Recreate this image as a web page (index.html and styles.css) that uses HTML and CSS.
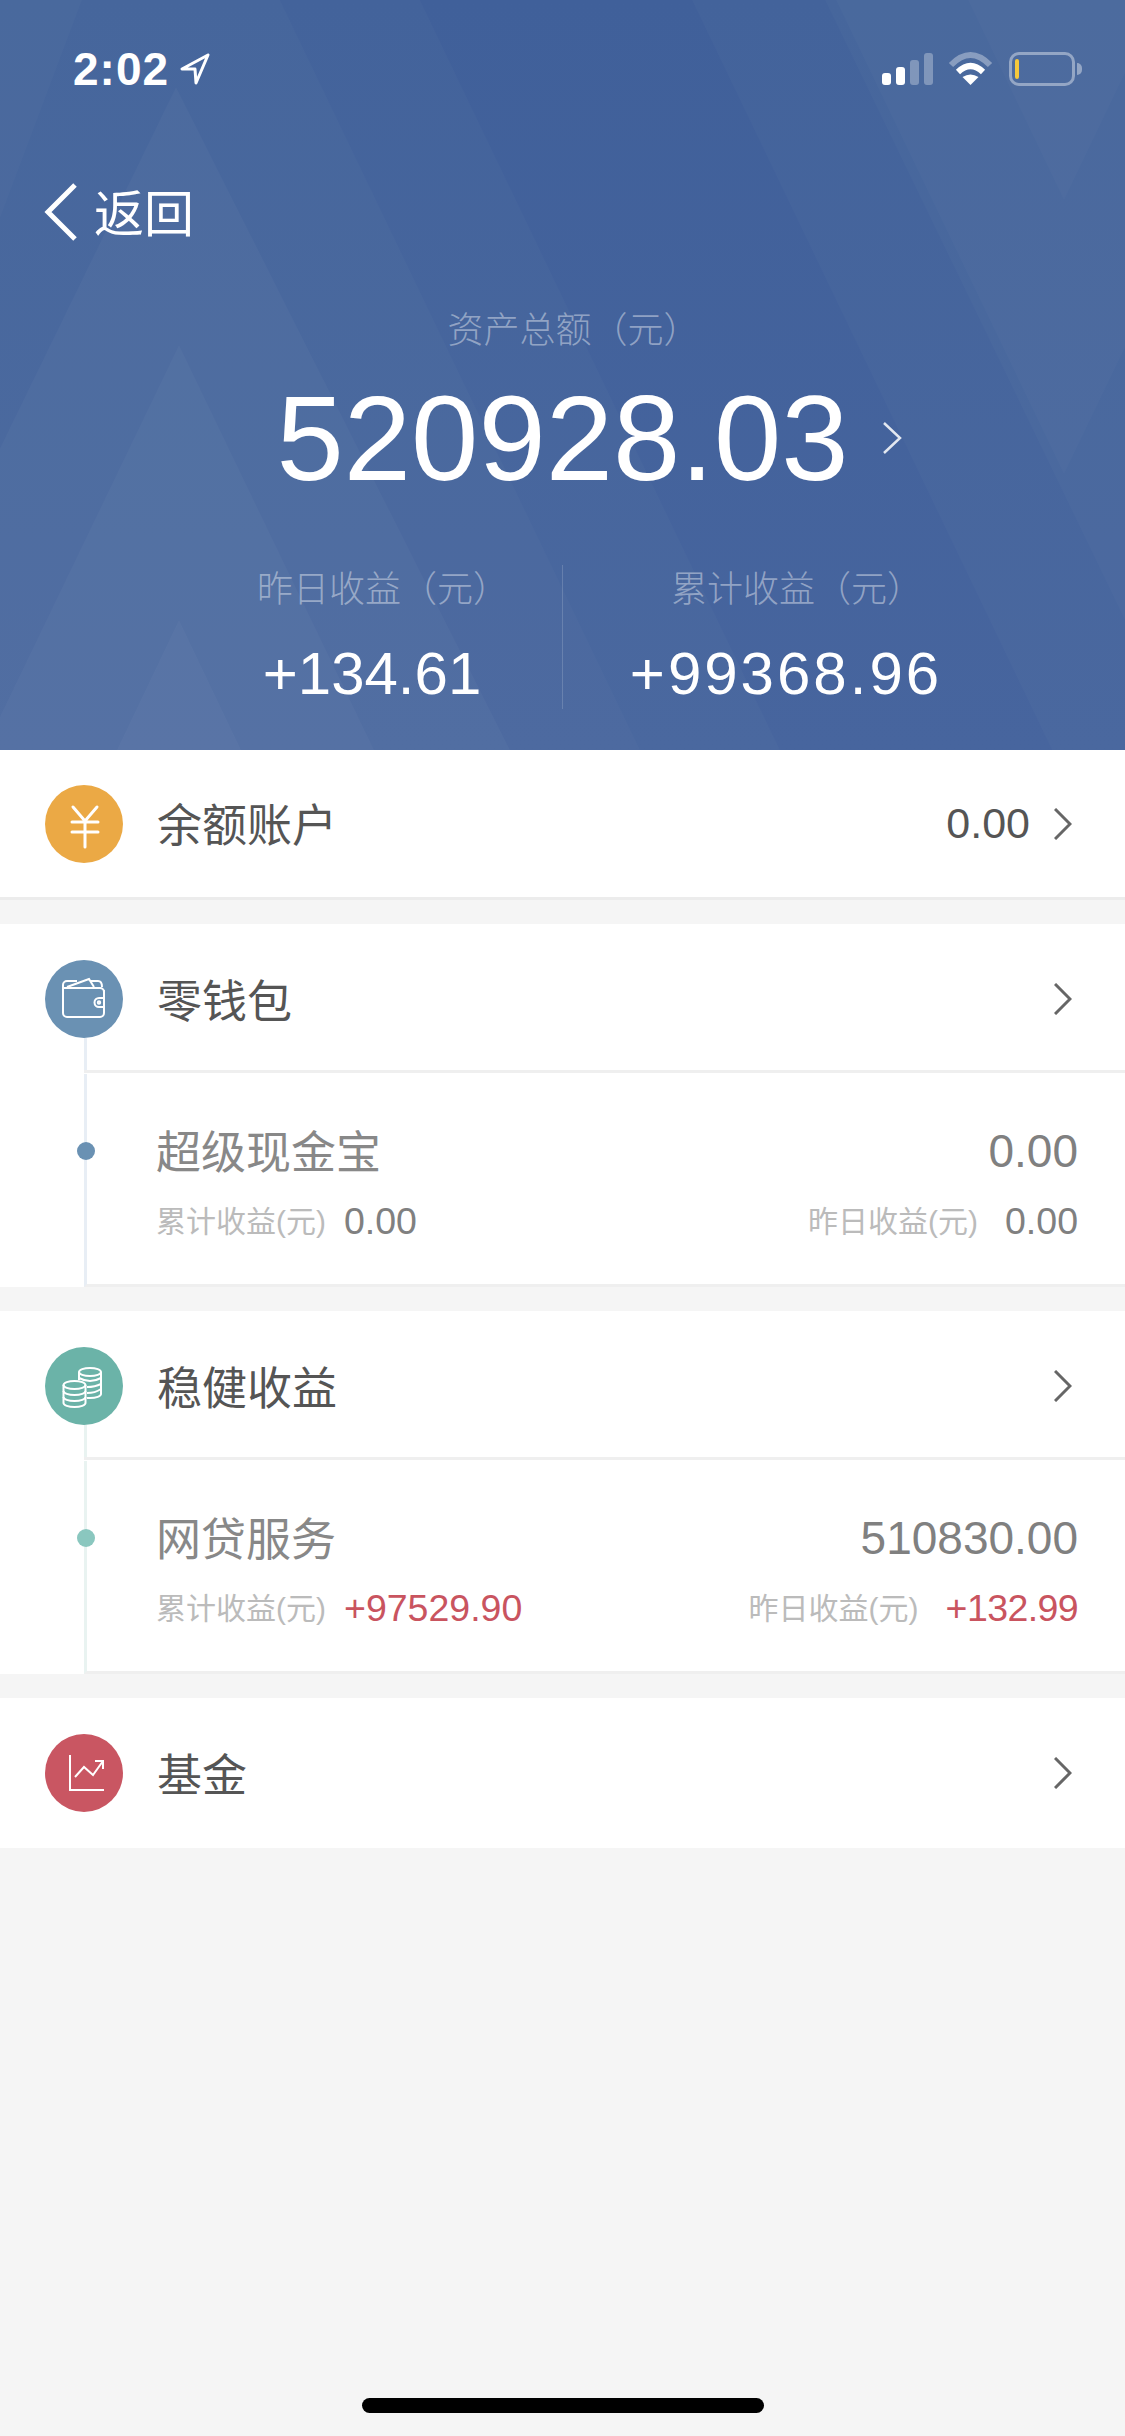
FILE: index.html
```html
<!DOCTYPE html>
<html lang="zh-CN">
  <head>
    <meta charset="UTF-8" />
    <title>资产总额</title>
    <link rel="stylesheet" href="styles.css">
  </head>
  <body>
    <div class="page">
      <header class="hero">
        <!-- faceted background -->
        <svg class="hero-bg" viewBox="0 0 1125 750" preserveAspectRatio="none">
          <g fill="#fff" fill-opacity="0.018">
            <polygon points="0,0 420,0 780,750 0,750" />
            <polygon points="0,0 280,0 640,750 0,750" />
            <polygon points="0,0 82,0 -200,750 0,750" />
            <polygon points="692,0 1125,0 1125,750 1052,750" />
            <polygon points="825,0 1125,0 1125,620" />
            <polygon points="968,0 1160,0 1064,200" />
            <polygon points="836,0 1292,0 1064,474" />
          </g>
          <g fill="#fff" fill-opacity="0.026">
            <polygon points="176,87 510,750 -147,750" />
            <polygon points="179,345 374,750 -16,750" />
            <polygon points="179,620 241,750 117,750" />
          </g>
        </svg>

        <div class="status">
          <div class="status-left">
            <span class="clock">2:02</span>
            <svg class="loc" width="32" height="32" viewBox="0 0 32 32">
              <path d="M29 2 L3 16 H16 L17 30 Z" fill="none" stroke="#fff" stroke-width="3" stroke-linejoin="round" />
            </svg>
          </div>
          <div class="status-right">
            <div class="signal">
              <i class="bar bar-1"></i>
              <i class="bar bar-2"></i>
              <i class="bar bar-3 dim"></i>
              <i class="bar bar-4 dim"></i>
            </div>
            <svg class="wifi" width="45" height="33" viewBox="0 0 45 33">
              <path d="M3 13 Q22.5 -7 42 13" fill="none" stroke="#fff" stroke-opacity="0.35" stroke-width="6" />
              <path d="M10 20 Q22.5 8 35 20" fill="none" stroke="#fff" stroke-width="6" />
              <path d="M22.5 33 L14.5 25 Q22.5 20 30.5 25 Z" fill="#fff" />
            </svg>
            <div class="battery">
              <div class="battery-box"><span class="battery-level"></span></div>
              <span class="battery-nub"></span>
            </div>
          </div>
        </div>

        <div class="back">
          <svg width="34" height="58" viewBox="0 0 34 58">
            <path d="M31 2 L4 29 L31 56" fill="none" stroke="#fff" stroke-width="5" />
          </svg>
          <span class="back-text">返回</span>
        </div>

        <div class="hero-label total-label">资产总额（元）</div>
        <div class="total">
          <span class="total-num">520928.03</span>
          <svg class="total-arrow" width="20" height="32" viewBox="0 0 20 32">
            <path d="M2 1 L18 16 L2 31" fill="none" stroke="#fff" stroke-opacity="0.85" stroke-width="2.5" />
          </svg>
        </div>

        <div class="stats">
          <div class="stat stat-left">
            <div class="hero-label">昨日收益（元）</div>
            <div class="stat-num">+134.61</div>
          </div>
          <div class="stat stat-right">
            <div class="hero-label">累计收益（元）</div>
            <div class="stat-num stat-num-wide">+99368.96</div>
          </div>
        </div>
      </header>

      <section class="group">
        <div class="row">
          <span class="icon icon-yellow">
            <svg width="78" height="78" viewBox="0 0 78 78" fill="none" stroke="#fff" stroke-width="3" stroke-linecap="round">
              <path d="M28 22 L40 36 L52 22 M27 37 H53 M27 47 H53 M40 36 V62" />
            </svg>
          </span>
          <span class="row-title">余额账户</span>
          <span class="row-value">0.00</span>
          <svg class="chevron" width="18" height="32" viewBox="0 0 18 32">
            <path d="M1 1 L16 16 L1 31" fill="none" stroke="#666" stroke-width="3" />
          </svg>
        </div>
      </section>

      <section class="group group-blue">
        <div class="row row-open">
          <span class="icon icon-blue">
            <svg width="78" height="78" viewBox="0 0 78 78" fill="none" stroke="#fff" stroke-width="2">
              <path d="M59 30 V53 a4 4 0 0 1 -4 4 H22 a4 4 0 0 1 -4 -4 V25 a4 4 0 0 1 4 -4 H32" />
              <path d="M19 28 H55 a4 4 0 0 1 4 4" />
              <path d="M22 27 L44 19 L49 27 M46 21 H53 Q57 21 57 27" />
              <path d="M59 38 H54 a4.5 4.5 0 0 0 0 9 H59" />
              <circle cx="54" cy="42.5" r="1.2" />
            </svg>
          </span>
          <span class="row-title">零钱包</span>
          <svg class="chevron" width="18" height="32" viewBox="0 0 18 32">
            <path d="M1 1 L16 16 L1 31" fill="none" stroke="#666" stroke-width="3" />
          </svg>
        </div>
        <div class="sub">
          <span class="dot"></span>
          <div class="sub-line">
            <span class="sub-title">超级现金宝</span>
            <span class="sub-amount">0.00</span>
          </div>
          <div class="sub-line">
            <span class="sub-pair"><span class="sub-label">累计收益(元)</span><span class="sub-num">0.00</span></span>
            <span class="sub-pair sub-pair-right"><span class="sub-label">昨日收益(元)</span><span class="sub-num">0.00</span></span>
          </div>
        </div>
      </section>

      <section class="group group-green">
        <div class="row row-open">
          <span class="icon icon-green">
            <svg width="78" height="78" viewBox="0 0 78 78" fill="none" stroke="#fff" stroke-width="2">
              <ellipse cx="45" cy="25" rx="11" ry="4" />
              <path d="M34 25 V33 M56 25 V47 a11 4 0 0 1 -11 4 H42" />
              <path d="M34 31 Q45 37 56 31 M42 40 Q50 40 56 37 M42 46 Q50 46 56 42" />
              <ellipse cx="29.5" cy="38" rx="11" ry="4" />
              <path d="M18.5 38 V56 a11 4 0 0 0 22 0 V38" />
              <path d="M18.5 44 a11 4 0 0 0 22 0 M18.5 50 a11 4 0 0 0 22 0" />
            </svg>
          </span>
          <span class="row-title">稳健收益</span>
          <svg class="chevron" width="18" height="32" viewBox="0 0 18 32">
            <path d="M1 1 L16 16 L1 31" fill="none" stroke="#666" stroke-width="3" />
          </svg>
        </div>
        <div class="sub">
          <span class="dot"></span>
          <div class="sub-line">
            <span class="sub-title">网贷服务</span>
            <span class="sub-amount">510830.00</span>
          </div>
          <div class="sub-line">
            <span class="sub-pair"><span class="sub-label">累计收益(元)</span><span class="sub-num red">+97529.90</span></span>
            <span class="sub-pair sub-pair-right"><span class="sub-label">昨日收益(元)</span><span class="sub-num red tight">+132.99</span></span>
          </div>
        </div>
      </section>

      <section class="group">
        <div class="row row-last">
          <span class="icon icon-red">
            <svg width="78" height="78" viewBox="0 0 78 78" fill="none" stroke="#fff" stroke-width="2">
              <path d="M25 21 V56 H59" />
              <path d="M30 43 L39 33 L48 41 L58 27 M50 27 H58 V35" />
            </svg>
          </span>
          <span class="row-title">基金</span>
          <svg class="chevron" width="18" height="32" viewBox="0 0 18 32">
            <path d="M1 1 L16 16 L1 31" fill="none" stroke="#666" stroke-width="3" />
          </svg>
        </div>
      </section>

      <div class="home-bar"></div>
    </div>
  </body>
</html>
```

FILE: styles.css
```css
* {
  box-sizing: border-box;
}
body {
  margin: 0;
  font-family: "Liberation Sans", "Noto Sans CJK SC", sans-serif;
}
.page {
  width: 1125px;
  height: 2436px;
  background: #f5f5f5;
  display: flex;
  flex-direction: column;
  overflow: hidden;
}

/* top blue area */
.hero {
  position: relative;
  height: 750px;
  flex: none;
  padding-top: 52px;
  background: linear-gradient(180deg, #40609a, #47659e);
  color: #fff;
  overflow: hidden;
}
.hero-bg {
  position: absolute;
  left: 0;
  top: 0;
  width: 1125px;
  height: 750px;
}
.status,
.back,
.hero-label,
.total,
.stats {
  position: relative;
}
.status {
  height: 34px;
  display: flex;
  justify-content: space-between;
  padding: 0 43px 0 73px;
}
.status-left {
  display: flex;
  align-items: center;
  gap: 10px;
}
.clock {
  font-size: 46px;
  line-height: 34px;
  font-weight: bold;
  letter-spacing: 1px;
}
.status-right {
  display: flex;
}
.signal {
  display: flex;
  align-items: flex-end;
  gap: 5px;
  height: 33px;
}
.bar {
  display: block;
  width: 9px;
  background: #fff;
  border-radius: 3px;
}
.bar-1 {
  height: 12px;
}
.bar-2 {
  height: 18px;
}
.bar-3 {
  height: 25px;
}
.bar-4 {
  height: 32px;
}
.bar.dim {
  background: rgba(255, 255, 255, 0.3);
}
.wifi {
  margin-left: 15px;
}
.battery {
  display: flex;
  align-items: center;
  margin-left: 16px;
  height: 34px;
}
.battery-box {
  width: 66px;
  height: 34px;
  border: 3px solid rgba(255, 255, 255, 0.4);
  border-radius: 10px;
  padding: 4px 3px;
}
.battery-level {
  display: block;
  width: 4px;
  height: 20px;
  background: #f5c83c;
  border-radius: 2px;
}
.battery-nub {
  width: 5px;
  height: 12px;
  margin-left: 2px;
  background: rgba(255, 255, 255, 0.4);
  border-radius: 0 6px 6px 0;
}
.back {
  display: flex;
  align-items: center;
  gap: 16px;
  margin-top: 97px;
  padding-left: 44px;
  height: 58px;
  font-size: 50px;
}
.back-text {
  padding-bottom: 4px;
}
.hero-label {
  font-size: 36px;
  line-height: 50px;
  font-weight: 300;
  color: rgba(255, 255, 255, 0.42);
  text-align: center;
  padding-left: 22px;
}
.total-label {
  margin-top: 65px;
}
.total {
  display: flex;
  justify-content: center;
  align-items: center;
  height: 130px;
  margin-top: 17px;
}
.total-num {
  font-size: 121px;
  line-height: 130px;
}
.total-arrow {
  margin-left: 34px;
  margin-right: -54px;
}
.stats {
  display: grid;
  grid-template-columns: 563px 562px;
  margin-top: 62px;
  height: 144px;
}
.stat {
  text-align: center;
}
.stat-left {
  padding-left: 182px;
  border-right: 1px solid rgba(255, 255, 255, 0.16);
}
.stat-right {
  padding-left: 2px;
  padding-right: 118px;
}
.stat-num {
  font-size: 60px;
  line-height: 70px;
  margin-top: 24px;
}
.stat-num-wide {
  letter-spacing: 3px;
}

/* white lists */
.group {
  background: #fff;
  flex: none;
  margin-bottom: 24px;
}
.row {
  position: relative;
  display: flex;
  align-items: center;
  height: 150px;
  padding: 0 53px 0 45px;
  border-bottom: 3px solid #ececec;
}
.row-open {
  border-bottom: 0;
}
.row-last {
  border-bottom: 0;
}
.row-open::before {
  content: "";
  position: absolute;
  left: 84px;
  right: 0;
  bottom: 1px;
  height: 3px;
  background: #efefef;
}
.row-open::after {
  content: "";
  position: absolute;
  left: 84px;
  top: 114px;
  bottom: 4px;
  width: 3px;
  background: #e8eef5;
}
.group-green .row-open::after {
  background: #e9f3f1;
}
.icon {
  width: 78px;
  height: 78px;
  border-radius: 50%;
  flex: none;
}
.icon svg {
  display: block;
}
.icon-yellow {
  background: #eba945;
}
.icon-blue {
  background: #6a91b3;
}
.icon-green {
  background: #6bb3a8;
}
.icon-red {
  background: #c95662;
}
.row-title {
  margin-left: 34px;
  padding-bottom: 2px;
  font-size: 45px;
  color: #555;
  flex: 1;
}
.row-value {
  font-size: 43px;
  color: #555;
  margin-right: 24px;
}
.chevron {
  flex: none;
}
.sub {
  position: relative;
  margin-left: 84px;
  height: 213px;
  padding: 47px 47px 0 69px;
  border-left: 3px solid #e8eef5;
  border-bottom: 3px solid #efefef;
}
.group-green .sub {
  border-left-color: #e9f3f1;
}
.dot {
  position: absolute;
  left: -10px;
  top: 68px;
  width: 18px;
  height: 18px;
  border-radius: 50%;
  background: #6a91b3;
}
.group-green .dot {
  background: #8ac7bf;
}
.sub-line {
  display: flex;
  justify-content: space-between;
  align-items: center;
  height: 60px;
}
.sub-line + .sub-line {
  height: 40px;
  margin-top: 20px;
}
.sub-title {
  font-size: 45px;
  padding-bottom: 3px;
  color: #888;
}
.sub-amount {
  font-size: 46px;
  color: #808080;
}
.sub-pair {
  display: flex;
  align-items: center;
  gap: 18px;
}
.sub-pair-right {
  gap: 27px;
}
.sub-label {
  font-size: 30px;
  padding-bottom: 4px;
  color: #bbb;
}
.sub-num {
  font-size: 37.5px;
  color: #808080;
}
.sub-num.red {
  color: #c9545f;
}
.sub-num.tight {
  letter-spacing: -0.6px;
}
.home-bar {
  width: 402px;
  height: 15px;
  margin: auto auto 23px;
  background: #000;
  border-radius: 8px;
}
```
